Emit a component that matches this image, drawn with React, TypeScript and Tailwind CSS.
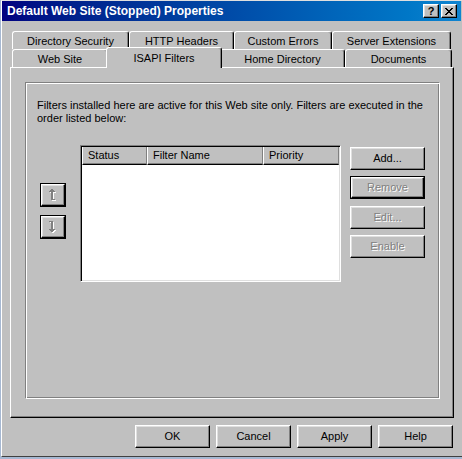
import React from "react";

const raised =
  "border border-t-white border-l-white border-r-black border-b-black shadow-[inset_-1px_-1px_0_#808080,inset_1px_1px_0_#dfdfdf]";
const dimText = "text-[#808080] [text-shadow:1px_1px_0_#fff]";

function PushButton({
  label,
  disabled,
  isDefault,
  className,
}: {
  label: string;
  disabled?: boolean;
  isDefault?: boolean;
  className?: string;
}) {
  const face = (
    <div className={`flex h-full w-full items-center justify-center bg-[#c0c0c0] ${raised}`}>
      <span className={disabled ? dimText : "text-black"}>{label}</span>
    </div>
  );
  if (isDefault) {
    return <div className={`border border-black ${className ?? ""}`}>{face}</div>;
  }
  return <div className={className}>{face}</div>;
}

function Tab({ label, w }: { label: string; w: string }) {
  return (
    <div
      className={`${w} flex h-full items-center justify-center rounded-t-[3px] border-t border-l border-r border-t-white border-l-white border-r-black bg-[#c0c0c0] pt-[1px] shadow-[inset_-1px_0_0_#808080]`}
    >
      {label}
    </div>
  );
}

function UpIcon() {
  const bits = (
    <>
      <rect x="3" y="0" width="2" height="1" />
      <rect x="2" y="1" width="4" height="1" />
      <rect x="1" y="2" width="6" height="1" />
      <rect x="3" y="3" width="2" height="8" />
      <rect x="5" y="10" width="2" height="1" />
    </>
  );
  return (
    <svg width="10" height="13" viewBox="0 0 10 13" shapeRendering="crispEdges">
      <g fill="#fff" transform="translate(1 1)">{bits}</g>
      <g fill="#808080">{bits}</g>
    </svg>
  );
}

function DownIcon() {
  const bits = (
    <>
      <rect x="1" y="0" width="2" height="1" />
      <rect x="3" y="0" width="2" height="8" />
      <rect x="1" y="8" width="6" height="1" />
      <rect x="2" y="9" width="4" height="1" />
      <rect x="3" y="10" width="2" height="1" />
    </>
  );
  return (
    <svg width="10" height="13" viewBox="0 0 10 13" shapeRendering="crispEdges">
      <g fill="#fff" transform="translate(1 1)">{bits}</g>
      <g fill="#808080">{bits}</g>
    </svg>
  );
}

function ArrowButton({ children, className }: { children: React.ReactNode; className?: string }) {
  return (
    <div className={`h-[24px] w-[26px] border border-black ${className ?? ""}`}>
      <div className={`flex h-full w-full items-center justify-center bg-[#c0c0c0] ${raised}`}>{children}</div>
    </div>
  );
}

function HeaderCell({ label, w }: { label: string; w: string }) {
  return (
    <div
      className={`${w} flex h-full items-center border-l border-r border-b border-l-white border-r-[#808080] border-b-black pl-[5px] shadow-[inset_0_-1px_0_#808080]`}
    >
      {label}
    </div>
  );
}

export default function App() {
  return (
    <div className="h-[459px] w-[462px] overflow-hidden bg-[#a6b8d2] font-['Liberation_Sans',Arial,sans-serif] text-[11px] leading-[13px] text-black">
      <div className="ml-[1px] h-[457px] w-[461px] border-t border-l border-b border-t-[#dfdfdf] border-l-white border-b-[#404040] bg-[#c0c0c0]">
        {/* caption */}
        <div className="flex h-[20px] w-[459px] items-center bg-gradient-to-r from-[#000080] to-[#1084d0] pl-[5px] pr-[4px]">
          <span className="pt-[1px] text-[12px] font-bold text-white">Default Web Site (Stopped) Properties</span>
          <div className="ml-auto flex gap-[2px]">
            <div className={`flex h-[14px] w-[16px] items-center justify-center bg-[#c0c0c0] ${raised}`}>
              <span className="text-[11px] font-bold leading-none">?</span>
            </div>
            <div className={`flex h-[14px] w-[16px] items-center justify-center bg-[#c0c0c0] ${raised}`}>
              <svg width="8" height="7" viewBox="0 0 8 7" shapeRendering="crispEdges">
                <path d="M0 0h2v1h-2zM6 0h2v1h-2zM1 1h2v1h-2zM5 1h2v1h-2zM2 2h4v1h-4zM3 3h2v1h-2zM2 4h4v1h-4zM1 5h2v1h-2zM5 5h2v1h-2zM0 6h2v1h-2zM6 6h2v1h-2z" fill="#000" />
              </svg>
            </div>
          </div>
        </div>

        {/* tab control */}
        <div className="ml-[8px] mt-[10px] w-[444px]">
          <div className="ml-[2px] flex h-[18px]">
            <Tab label="Directory Security" w="w-[117px]" />
            <Tab label="HTTP Headers" w="w-[105px]" />
            <Tab label="Custom Errors" w="w-[98px]" />
            <Tab label="Server Extensions" w="w-[119px]" />
          </div>
          <div className="ml-[2px] flex h-[18px] items-start">
            <Tab label="Web Site" w="w-[96px]" />
            <div className="relative z-10 -mx-[2px] -mt-[2px] flex h-[21px] w-[116px] items-center justify-center rounded-t-[3px] border-t border-l border-r border-t-white border-l-white border-r-black bg-[#c0c0c0] shadow-[inset_-1px_0_0_#808080]">
              ISAPI Filters
            </div>
            <Tab label="Home Directory" w="w-[125px]" />
            <Tab label="Documents" w="w-[107px]" />
          </div>

          <div className="h-[351px] border border-t-white border-l-white border-r-black border-b-black pl-[14px] pt-[14px] shadow-[inset_-1px_-1px_0_#808080]">
            <div className="h-[317px] w-[415px] border border-t-[#808080] border-l-[#808080] border-r-white border-b-white shadow-[inset_1px_1px_0_#fff,inset_-1px_-1px_0_#808080]">
              <p className="w-[400px] pl-[11px] pt-[16px]">
                Filters installed here are active for this Web site only. Filters are executed in the order listed below:
              </p>

              <div className="mt-[20px] flex items-start">
                <div className="ml-[14px] mt-[38px] flex flex-col gap-[8px]">
                  <ArrowButton>
                    <UpIcon />
                  </ArrowButton>
                  <ArrowButton>
                    <DownIcon />
                  </ArrowButton>
                </div>

                <div className="ml-[14px] h-[137px] w-[261px] border border-t-[#808080] border-l-[#808080] border-r-white border-b-white p-[1px] shadow-[inset_1px_1px_0_#000,inset_-1px_-1px_0_#dfdfdf]">
                  <div className="flex h-full flex-col bg-white">
                    <div className="flex h-[18px] bg-[#c0c0c0]">
                      <HeaderCell label="Status" w="w-[65px]" />
                      <HeaderCell label="Filter Name" w="w-[116px]" />
                      <HeaderCell label="Priority" w="w-[76px]" />
                    </div>
                  </div>
                </div>

                <div className="ml-[9px] mt-[2px] flex flex-col">
                  <PushButton label="Add..." className="h-[23px] w-[75px]" />
                  <PushButton label="Remove" disabled isDefault className="mt-[6px] h-[23px] w-[75px]" />
                  <PushButton label="Edit..." disabled className="mt-[7px] h-[23px] w-[75px]" />
                  <PushButton label="Enable" disabled className="mt-[6px] h-[23px] w-[75px]" />
                </div>
              </div>
            </div>
          </div>
        </div>

        {/* dialog buttons */}
        <div className="ml-[8px] mt-[7px] flex w-[444px] justify-end gap-[6px] pr-[1px]">
          <PushButton label="OK" className="h-[23px] w-[75px]" />
          <PushButton label="Cancel" className="h-[23px] w-[75px]" />
          <PushButton label="Apply" className="h-[23px] w-[75px]" />
          <PushButton label="Help" className="h-[23px] w-[75px]" />
        </div>
      </div>
    </div>
  );
}
